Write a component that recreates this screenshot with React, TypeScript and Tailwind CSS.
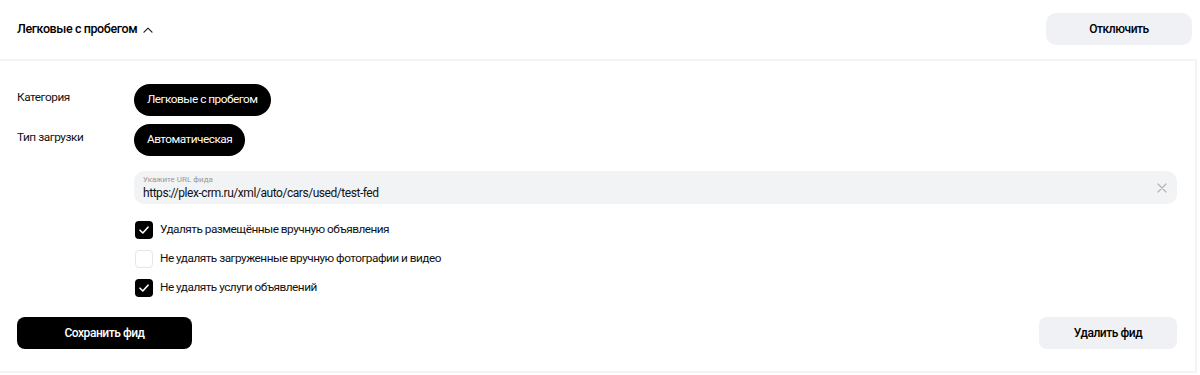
import React from "react";

const Check = () => (
  <svg width="10" height="8" viewBox="0 0 10 8" fill="none">
    <path d="M1 4.2L3.8 7L9 1.2" stroke="white" strokeWidth="1.6" strokeLinecap="round" strokeLinejoin="round" />
  </svg>
);

function CheckRow({ checked, label }: { checked: boolean; label: string }) {
  return (
    <div className="flex items-center h-[29px]">
      <div
        className={
          checked
            ? "w-[18px] h-[18px] rounded-[4px] bg-black flex items-center justify-center ml-px"
            : "w-[18px] h-[18px] rounded-[4px] bg-white border border-[#e6e6e6] ml-px"
        }
      >
        {checked && <Check />}
      </div>
      <span className="ml-[7px] text-[11.8px] tracking-[-0.5px] text-[#111]">{label}</span>
    </div>
  );
}

export default function App() {
  return (
    <div className="w-[1200px] h-[375px] bg-white text-black overflow-hidden" style={{ fontFamily: "Roboto, 'Noto Sans', sans-serif" }}>
      <div className="h-[59px] flex items-center justify-between pl-[17px] pr-[8px]">
        <div className="flex items-center gap-[6px]">
          <span className="text-[12.5px] font-medium tracking-[-0.4px]">Легковые с пробегом</span>
          <svg width="10" height="6" viewBox="0 0 10 6" fill="none">
            <path d="M1 5.2L5 1.2L9 5.2" stroke="#222" strokeWidth="1.2" strokeLinecap="round" strokeLinejoin="round" />
          </svg>
        </div>
        <button className="w-[146px] h-[32px] rounded-[10px] bg-[#f0f1f4] text-[12px] tracking-[-0.45px] font-medium mt-[-2px]">Отключить</button>
      </div>
      <div className="h-[314px] border-t-2 border-b-2 border-r-2 border-[#f4f4f4] w-[1197px] pl-[17px] pr-[18px] pt-[23px] flex flex-col">
        <div className="flex">
          <div className="w-[117px] text-[11.8px] tracking-[-0.45px] pt-[5px] text-[#111]">Категория</div>
          <div className="h-[32px] px-[13px] rounded-full bg-black text-white text-[11.8px] tracking-[-0.5px] flex items-center">Легковые с пробегом</div>
        </div>
        <div className="flex mt-[8px]">
          <div className="w-[117px] text-[11.8px] tracking-[-0.45px] pt-[5px] text-[#111]">Тип загрузки</div>
          <div className="h-[32px] px-[13px] rounded-full bg-black text-white text-[11.8px] tracking-[-0.5px] flex items-center">Автоматическая</div>
        </div>
        <div className="ml-[117px] mt-[15px] h-[33px] rounded-[10px] bg-[#f2f3f5] flex items-center pl-[9px] pr-[10px]">
          <div className="flex-1 flex flex-col leading-none">
            <span className="text-[8px] text-[#999]">Укажите URL фида</span>
            <span className="text-[12px] tracking-[-0.45px] text-[#111] mt-[3px]">https://plex-crm.ru/xml/auto/cars/used/test-fed</span>
          </div>
          <svg width="10" height="10" viewBox="0 0 10 10" fill="none">
            <path d="M1 1L9 9M9 1L1 9" stroke="#b3b3b3" strokeWidth="1.2" strokeLinecap="round" />
          </svg>
        </div>
        <div className="ml-[117px] mt-[11px] flex flex-col">
          <CheckRow checked label="Удалять размещённые вручную объявления" />
          <CheckRow checked={false} label="Не удалять загруженные вручную фотографии и видео" />
          <CheckRow checked label="Не удалять услуги объявлений" />
        </div>
        <div className="flex justify-between mt-[15px]">
          <button className="w-[175px] h-[32px] rounded-[8px] bg-black text-white text-[12px] tracking-[-0.45px] font-medium">Сохранить фид</button>
          <button className="w-[138px] h-[32px] rounded-[8px] bg-[#f0f1f4] text-[12px] tracking-[-0.45px] font-medium">Удалить фид</button>
        </div>
      </div>
    </div>
  );
}
